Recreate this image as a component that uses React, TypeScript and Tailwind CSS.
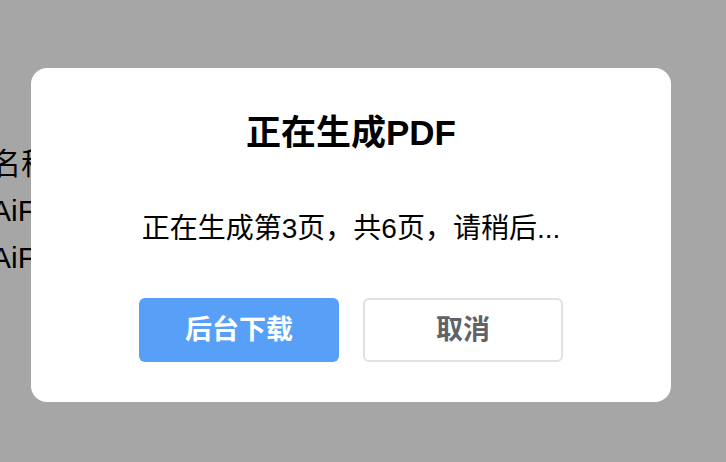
const font = 'font-["Liberation_Sans","Noto_Sans_CJK_SC",sans-serif]';

export default function App() {
  return (
    <div className={`${font} relative h-[462px] w-[726px] overflow-hidden bg-[#a6a6a6]`}>
      {/* page behind the overlay */}
      <div className="ml-[-9px] flex flex-col pt-[140px] text-[30px] leading-[47px] text-black">
        <span>名称</span>
        <span>AiFile</span>
        <span>AiFile</span>
      </div>

      {/* dialog */}
      <div className="absolute left-[31px] top-[68px] flex h-[334px] w-[640px] flex-col items-center rounded-[16px] bg-white pt-[45px]">
        <h2 className="text-[35px] font-bold leading-[40px] text-black">正在生成PDF</h2>
        <p className="mt-[58px] text-[28px] leading-[36px] text-black">正在生成第3页，共6页，请稍后...</p>
        <div className="mt-[51px] flex gap-[24px]">
          <button className="h-[64px] w-[200px] rounded-[6px] bg-[#589ff8] text-[27px] font-bold text-white">
            后台下载
          </button>
          <button className="h-[64px] w-[200px] rounded-[6px] border-2 border-[#dfe1e6] bg-white text-[27px] font-bold text-[#606266]">
            取消
          </button>
        </div>
      </div>
    </div>
  );
}
